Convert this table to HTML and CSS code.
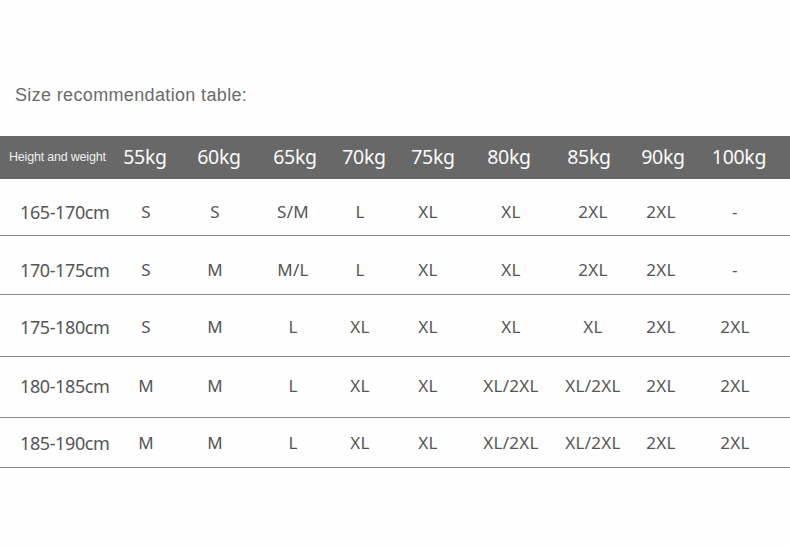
FILE: index.html
```html
<!DOCTYPE html>
<html>
<head>
<meta charset="utf-8">
<link rel="stylesheet" href="styles.css">
</head>
<body>
<div class="page">
  <div class="faint-top"></div>
  <h1 class="title">Size recommendation table:</h1>
  <div class="table">
    <div class="head">
      <div class="head-label">Height and weight</div>
      <div>55kg</div><div>60kg</div><div>65kg</div><div>70kg</div><div>75kg</div><div>80kg</div><div>85kg</div><div>90kg</div><div>100kg</div>
    </div>
    <div class="row r1">
      <div class="label">165-170cm</div>
      <div>S</div><div>S</div><div>S/M</div><div>L</div><div>XL</div><div>XL</div><div>2XL</div><div>2XL</div><div>-</div>
    </div>
    <div class="row r2">
      <div class="label">170-175cm</div>
      <div>S</div><div>M</div><div>M/L</div><div>L</div><div>XL</div><div>XL</div><div>2XL</div><div>2XL</div><div>-</div>
    </div>
    <div class="row r3">
      <div class="label">175-180cm</div>
      <div>S</div><div>M</div><div>L</div><div>XL</div><div>XL</div><div>XL</div><div>XL</div><div>2XL</div><div>2XL</div>
    </div>
    <div class="row r4">
      <div class="label">180-185cm</div>
      <div>M</div><div>M</div><div>L</div><div>XL</div><div>XL</div><div>XL/2XL</div><div>XL/2XL</div><div>2XL</div><div>2XL</div>
    </div>
    <div class="row r5">
      <div class="label">185-190cm</div>
      <div>M</div><div>M</div><div>L</div><div>XL</div><div>XL</div><div>XL/2XL</div><div>XL/2XL</div><div>2XL</div><div>2XL</div>
    </div>
  </div>
</div>
</body>
</html>
```
FILE: styles.css
```css
html, body {
  margin: 0;
  padding: 0;
  background: #fefefe;
}
.page {
  width: 790px;
  height: 546px;
  overflow: hidden;
}
.faint-top {
  height: 78px;
}
.title {
  margin: 0 0 0 15px;
  height: 58px;
  font-family: "Liberation Sans", Arial, sans-serif;
  font-weight: normal;
  font-size: 18px;
  letter-spacing: 0.35px;
  line-height: 34px;
  color: #6a6a6a;
}
.table {
  font-family: "Noto Sans", "Open Sans", sans-serif;
}
.head {
  display: grid;
  grid-template-columns: 110px 70px 78px 74px 64px 74px 78px 82px 66px 86px;
  height: 43px;
  align-items: center;
  background: #686868;
  color: #fafafa;
  font-size: 19.5px;
  letter-spacing: -0.3px;
  text-align: center;
  padding-bottom: 2px;
  box-sizing: border-box;
}
.head-label {
  text-align: left;
  padding-left: 9px;
  font-family: "Liberation Sans", Arial, sans-serif;
  font-size: 12.5px;
  letter-spacing: -0.2px;
  color: #eeeeee;
}
.row {
  display: grid;
  grid-template-columns: 110px 72px 66px 90px 44px 92px 74px 90px 46px 102px;
  align-items: center;
  text-align: center;
  color: #555;
  font-size: 17px;
  letter-spacing: 0.3px;
  border-bottom: 1px solid #8a8a8a;
  box-sizing: border-box;
}
.label {
  text-align: left;
  padding-left: 20px;
  font-size: 18px;
  letter-spacing: -0.4px;
}
.r1 { height: 57px; padding-top: 9px; }
.r2 { height: 59px; padding-top: 9px; }
.r3 { height: 62px; padding-top: 2px; }
.r4 { height: 61px; padding-bottom: 3px; }
.r5 { height: 50px; }
```
